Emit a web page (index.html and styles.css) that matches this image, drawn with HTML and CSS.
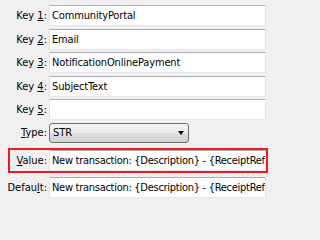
FILE: index.html
```html
<!DOCTYPE html>
<html>
<head>
<meta charset="utf-8">
<link rel="stylesheet" href="styles.css">
</head>
<body>
<div class="form">
  <div class="row">
    <div class="label">Key <u>1</u>:</div>
    <div class="field">CommunityPortal</div>
  </div>
  <div class="row">
    <div class="label">Key <u>2</u>:</div>
    <div class="field">Email</div>
  </div>
  <div class="row">
    <div class="label">Key <u>3</u>:</div>
    <div class="field">NotificationOnlinePayment</div>
  </div>
  <div class="row">
    <div class="label">Key <u>4</u>:</div>
    <div class="field">SubjectText</div>
  </div>
  <div class="row">
    <div class="label">Key <u>5</u>:</div>
    <div class="field"></div>
  </div>
  <div class="row row-type">
    <div class="label"><u>T</u>ype:</div>
    <div class="combo">
      <span class="combo-text">STR</span>
      <span class="combo-arrow"></span>
    </div>
  </div>
  <div class="row row-value">
    <div class="label"><u>V</u>alue:</div>
    <div class="field field-long">New transaction: {Description} - {ReceiptRef</div>
  </div>
  <div class="row row-default">
    <div class="label">Defau<u>l</u>t:</div>
    <div class="field field-long">New transaction: {Description} - {ReceiptRef</div>
  </div>
</div>
</body>
</html>
```

FILE: styles.css
```css
html, body {
  margin: 0;
  padding: 0;
  background: #f0f0f0;
  width: 269px;
  height: 201px;
  overflow: hidden;
}
body {
  font-family: "DejaVu Sans Condensed", "DejaVu Sans", sans-serif;
  font-size: 11px;
  color: #000;
}
.form {
  display: flex;
  flex-direction: column;
  padding: 5px 3px 0 0;
}
.row {
  display: flex;
  align-items: center;
  gap: 2px;
  margin-bottom: 2.5px;
}
.label {
  width: 47px;
  flex: none;
  text-align: right;
  white-space: nowrap;
}
.label u {
  text-decoration-thickness: 1px;
  text-underline-offset: 1px;
}
.field {
  flex: 1;
  min-width: 0;
  height: 19px;
  line-height: 19px;
  background: #fff;
  border: 1px solid #e2e3ea;
  border-top-color: #abadb3;
  border-bottom-color: #e3e9ef;
  padding-left: 2px;
  white-space: nowrap;
  overflow: hidden;
  letter-spacing: -0.15px;
}
.field-long {
  letter-spacing: -0.28px;
}
.row-type {
  margin-bottom: 5.5px;
}
.combo {
  width: 131px;
  height: 18px;
  border: 1px solid #707070;
  border-radius: 3px;
  background: linear-gradient(#f4f4f4, #ececec 50%, #dfdfdf 50%, #d2d2d2);
  display: flex;
  align-items: center;
  justify-content: space-between;
  padding: 0 4px 0 3px;
  box-sizing: content-box;
}
.combo-text {
  line-height: 18px;
}
.combo-arrow {
  width: 0;
  height: 0;
  border-left: 3.5px solid transparent;
  border-right: 3.5px solid transparent;
  border-top: 4px solid #000;
}
.row-value {
  margin-left: 8px;
  margin-right: -2px;
  border: 2px solid #ee1c1c;
  margin-bottom: 4px;
}
.row-value .label {
  width: 37px;
}
```
